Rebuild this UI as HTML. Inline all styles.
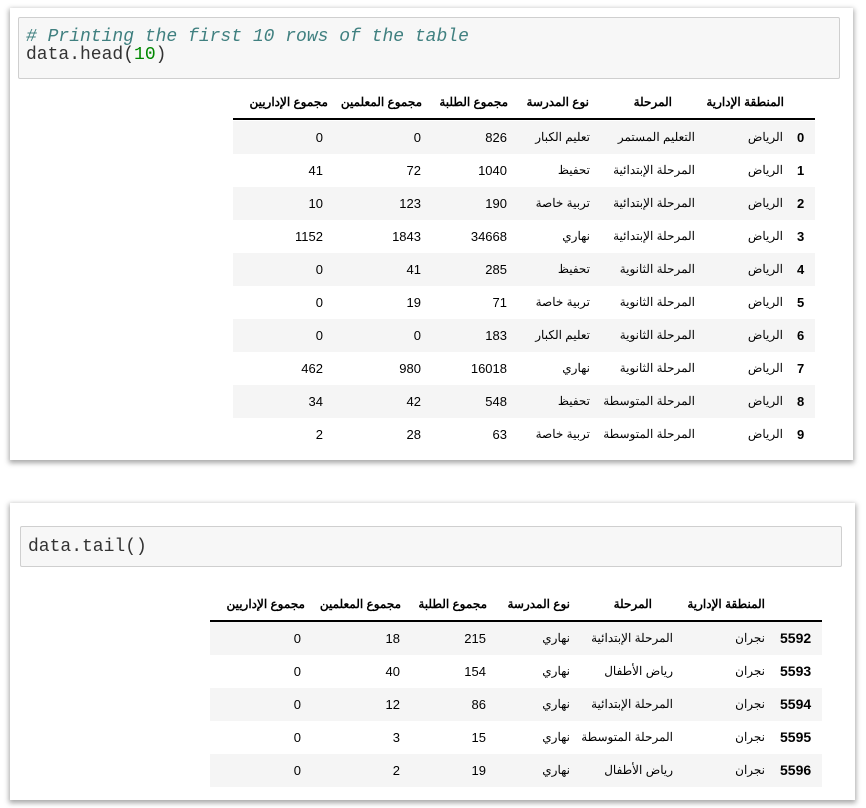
<!DOCTYPE html>
<html><head><meta charset="utf-8"><style>
body{margin:0;width:866px;height:808px;background:#fff;position:relative;overflow:hidden;font-family:"Liberation Sans","Noto Sans CJK SC",sans-serif;}
.card{position:absolute;background:#fff;box-shadow:0 2px 5px 1px rgba(0,0,0,0.35);}
.code{position:absolute;background:#f7f7f7;border:1px solid #cfcfcf;border-radius:2px;font-family:"Liberation Mono",monospace;font-size:18px;color:#333;line-height:18px;}
.cm{color:#408080;font-style:italic}
.nm{color:#080}
.r{position:absolute;height:33px;}
.s{background:#f5f5f5}
.c{position:absolute;white-space:nowrap;font-size:13px;color:#000;line-height:33px;text-align:right;direction:rtl}
.h{font-weight:bold;font-size:12px}
.ar{font-size:12px}
.i{font-weight:bold;font-size:13px;direction:ltr}
.i2{font-size:14px}
</style></head><body>

<div class="card" style="left:10px;top:8px;width:843px;height:452px"></div>
<div class="code" style="left:18px;top:17px;width:820px;height:60px;">
<div style="position:absolute;left:7px;top:10px"><span class="cm"># Printing the first 10 rows of the table</span><br>data.head(<span class="nm">10</span>)</div></div>

<div class="card" style="left:10px;top:503px;width:845px;height:297px"></div>
<div class="code" style="left:20px;top:526px;width:820px;height:39px;">
<div style="position:absolute;left:7px;top:11px">data.tail()</div></div>

<!-- Table 1 -->
<div style="position:absolute;left:233px;top:118px;width:582px;height:2px;background:#000"></div>
<div class="r s" style="left:233px;top:121px;width:582px"></div>
<div class="r s" style="left:233px;top:187px;width:582px"></div>
<div class="r s" style="left:233px;top:253px;width:582px"></div>
<div class="r s" style="left:233px;top:319px;width:582px"></div>
<div class="r s" style="left:233px;top:385px;width:582px"></div>

<div class="c h" style="right:538px;top:86px">مجموع الإداريين</div>
<div class="c h" style="right:444px;top:86px">مجموع المعلمين</div>
<div class="c h" style="right:358px;top:86px">مجموع الطلبة</div>
<div class="c h" style="right:277px;top:86px">نوع المدرسة</div>
<div class="c h" style="right:194px;top:86px">المرحلة</div>
<div class="c h" style="right:82px;top:86px">المنطقة الإدارية</div>

<!-- Table 2 -->
<div style="position:absolute;left:210px;top:620px;width:612px;height:2px;background:#000"></div>
<div class="r s" style="left:210px;top:622px;width:612px"></div>
<div class="r s" style="left:210px;top:688px;width:612px"></div>
<div class="r s" style="left:210px;top:754px;width:612px"></div>

<div class="c h" style="right:561px;top:588px">مجموع الإداريين</div>
<div class="c h" style="right:465px;top:588px">مجموع المعلمين</div>
<div class="c h" style="right:379px;top:588px">مجموع الطلبة</div>
<div class="c h" style="right:296px;top:588px">نوع المدرسة</div>
<div class="c h" style="right:214px;top:588px">المرحلة</div>
<div class="c h" style="right:101px;top:588px">المنطقة الإدارية</div>

<!-- t1 rows -->
<div class="c i" style="left:797px;top:121px">0</div><div class="c ar" style="right:83px;top:121px">الرياض</div><div class="c ar" style="right:171px;top:121px">التعليم المستمر</div><div class="c ar" style="right:276px;top:121px">تعليم الكبار</div><div class="c" style="right:359px;top:121px">826</div><div class="c" style="right:445px;top:121px">0</div><div class="c" style="right:543px;top:121px">0</div>
<div class="c i" style="left:797px;top:154px">1</div><div class="c ar" style="right:83px;top:154px">الرياض</div><div class="c ar" style="right:171px;top:154px">المرحلة الإبتدائية</div><div class="c ar" style="right:276px;top:154px">تحفيظ</div><div class="c" style="right:359px;top:154px">1040</div><div class="c" style="right:445px;top:154px">72</div><div class="c" style="right:543px;top:154px">41</div>
<div class="c i" style="left:797px;top:187px">2</div><div class="c ar" style="right:83px;top:187px">الرياض</div><div class="c ar" style="right:171px;top:187px">المرحلة الإبتدائية</div><div class="c ar" style="right:276px;top:187px">تربية خاصة</div><div class="c" style="right:359px;top:187px">190</div><div class="c" style="right:445px;top:187px">123</div><div class="c" style="right:543px;top:187px">10</div>
<div class="c i" style="left:797px;top:220px">3</div><div class="c ar" style="right:83px;top:220px">الرياض</div><div class="c ar" style="right:171px;top:220px">المرحلة الإبتدائية</div><div class="c ar" style="right:276px;top:220px">نهاري</div><div class="c" style="right:359px;top:220px">34668</div><div class="c" style="right:445px;top:220px">1843</div><div class="c" style="right:543px;top:220px">1152</div>
<div class="c i" style="left:797px;top:253px">4</div><div class="c ar" style="right:83px;top:253px">الرياض</div><div class="c ar" style="right:171px;top:253px">المرحلة الثانوية</div><div class="c ar" style="right:276px;top:253px">تحفيظ</div><div class="c" style="right:359px;top:253px">285</div><div class="c" style="right:445px;top:253px">41</div><div class="c" style="right:543px;top:253px">0</div>
<div class="c i" style="left:797px;top:286px">5</div><div class="c ar" style="right:83px;top:286px">الرياض</div><div class="c ar" style="right:171px;top:286px">المرحلة الثانوية</div><div class="c ar" style="right:276px;top:286px">تربية خاصة</div><div class="c" style="right:359px;top:286px">71</div><div class="c" style="right:445px;top:286px">19</div><div class="c" style="right:543px;top:286px">0</div>
<div class="c i" style="left:797px;top:319px">6</div><div class="c ar" style="right:83px;top:319px">الرياض</div><div class="c ar" style="right:171px;top:319px">المرحلة الثانوية</div><div class="c ar" style="right:276px;top:319px">تعليم الكبار</div><div class="c" style="right:359px;top:319px">183</div><div class="c" style="right:445px;top:319px">0</div><div class="c" style="right:543px;top:319px">0</div>
<div class="c i" style="left:797px;top:352px">7</div><div class="c ar" style="right:83px;top:352px">الرياض</div><div class="c ar" style="right:171px;top:352px">المرحلة الثانوية</div><div class="c ar" style="right:276px;top:352px">نهاري</div><div class="c" style="right:359px;top:352px">16018</div><div class="c" style="right:445px;top:352px">980</div><div class="c" style="right:543px;top:352px">462</div>
<div class="c i" style="left:797px;top:385px">8</div><div class="c ar" style="right:83px;top:385px">الرياض</div><div class="c ar" style="right:171px;top:385px">المرحلة المتوسطة</div><div class="c ar" style="right:276px;top:385px">تحفيظ</div><div class="c" style="right:359px;top:385px">548</div><div class="c" style="right:445px;top:385px">42</div><div class="c" style="right:543px;top:385px">34</div>
<div class="c i" style="left:797px;top:418px">9</div><div class="c ar" style="right:83px;top:418px">الرياض</div><div class="c ar" style="right:171px;top:418px">المرحلة المتوسطة</div><div class="c ar" style="right:276px;top:418px">تربية خاصة</div><div class="c" style="right:359px;top:418px">63</div><div class="c" style="right:445px;top:418px">28</div><div class="c" style="right:543px;top:418px">2</div>

<!-- t2 rows -->
<div class="c i i2" style="left:780px;top:622px">5592</div><div class="c ar" style="right:101px;top:622px">نجران</div><div class="c ar" style="right:193px;top:622px">المرحلة الإبتدائية</div><div class="c ar" style="right:296px;top:622px">نهاري</div><div class="c" style="right:380px;top:622px">215</div><div class="c" style="right:466px;top:622px">18</div><div class="c" style="right:565px;top:622px">0</div>
<div class="c i i2" style="left:780px;top:655px">5593</div><div class="c ar" style="right:101px;top:655px">نجران</div><div class="c ar" style="right:193px;top:655px">رياض الأطفال</div><div class="c ar" style="right:296px;top:655px">نهاري</div><div class="c" style="right:380px;top:655px">154</div><div class="c" style="right:466px;top:655px">40</div><div class="c" style="right:565px;top:655px">0</div>
<div class="c i i2" style="left:780px;top:688px">5594</div><div class="c ar" style="right:101px;top:688px">نجران</div><div class="c ar" style="right:193px;top:688px">المرحلة الإبتدائية</div><div class="c ar" style="right:296px;top:688px">نهاري</div><div class="c" style="right:380px;top:688px">86</div><div class="c" style="right:466px;top:688px">12</div><div class="c" style="right:565px;top:688px">0</div>
<div class="c i i2" style="left:780px;top:721px">5595</div><div class="c ar" style="right:101px;top:721px">نجران</div><div class="c ar" style="right:193px;top:721px">المرحلة المتوسطة</div><div class="c ar" style="right:296px;top:721px">نهاري</div><div class="c" style="right:380px;top:721px">15</div><div class="c" style="right:466px;top:721px">3</div><div class="c" style="right:565px;top:721px">0</div>
<div class="c i i2" style="left:780px;top:754px">5596</div><div class="c ar" style="right:101px;top:754px">نجران</div><div class="c ar" style="right:193px;top:754px">رياض الأطفال</div><div class="c ar" style="right:296px;top:754px">نهاري</div><div class="c" style="right:380px;top:754px">19</div><div class="c" style="right:466px;top:754px">2</div><div class="c" style="right:565px;top:754px">0</div>

</body></html>
